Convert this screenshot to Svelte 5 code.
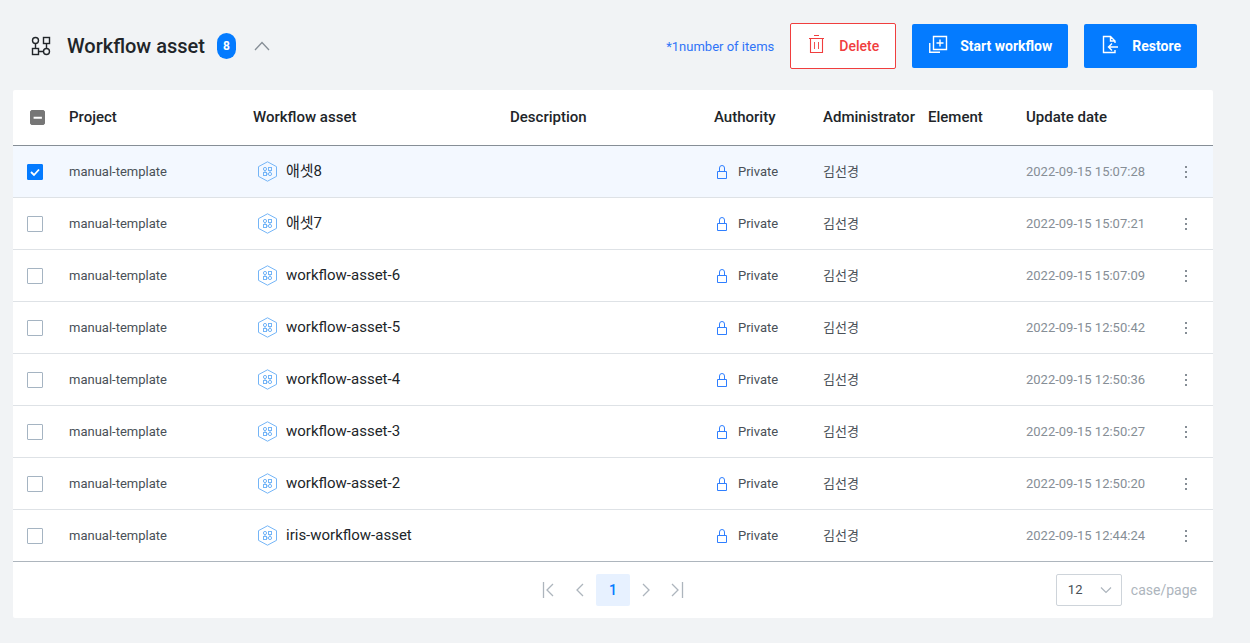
<script>
  const names = [
    ['애셋8', '2022-09-15 15:07:28'],
    ['애셋7', '2022-09-15 15:07:21'],
    ['workflow-asset-6', '2022-09-15 15:07:09'],
    ['workflow-asset-5', '2022-09-15 12:50:42'],
    ['workflow-asset-4', '2022-09-15 12:50:36'],
    ['workflow-asset-3', '2022-09-15 12:50:27'],
    ['workflow-asset-2', '2022-09-15 12:50:20'],
    ['iris-workflow-asset', '2022-09-15 12:44:24'],
  ];
  let rows = $state(
    names.map(([name, updated], i) => ({
      name,
      updated,
      project: 'manual-template',
      authority: 'Private',
      admin: '김선경',
      checked: i === 0,
    }))
  );
  let pageSize = $state('12');
  let open = $state(true);
  let selected = $derived(rows.filter((r) => r.checked).length);
  let allChecked = $derived(selected === rows.length);

  function toggleAll() {
    const next = !allChecked;
    rows.forEach((r) => (r.checked = next));
  }
</script>

<main>
  <header>
    <svg class="flow" viewBox="0 0 20 20" aria-hidden="true">
      <circle cx="4.5" cy="4.5" r="3" /><rect x="12.5" y="1.5" width="6" height="6" />
      <rect x="1.5" y="12.5" width="6" height="6" /><circle cx="15.5" cy="15.5" r="3" />
      <path d="M4.5 7.5v5M15.5 7.5v5M7.5 15.5h5" />
    </svg>
    <h1>Workflow asset</h1>
    <span class="count">{rows.length}</span>
    <button class="fold" aria-label="Toggle list" aria-expanded={open} onclick={() => (open = !open)}>
      <svg viewBox="0 0 16 10" aria-hidden="true"><path d="M1 9l7-7.5L15 9" /></svg>
    </button>

    <div class="actions">
      <span class="note">*{selected}number of items</span>
      <button class="btn danger">
        <svg viewBox="0 0 20 20" aria-hidden="true">
          <path d="M2 4.5h15M7 1.500h5M3.500 4.5v14h12v-14" /><path class="thin" d="M7.500 8v7M11.500 8v7" />
        </svg>
        Delete
      </button>
      <button class="btn primary">
        <svg viewBox="0 0 20 20" aria-hidden="true">
          <path d="M5.500 2.500h13v13h-13zM12 5.500v7M8.500 9h7M1.750 9v9.250h10.250" />
        </svg>
        Start workflow
      </button>
      <button class="btn primary">
        <svg viewBox="0 0 20 20" aria-hidden="true">
          <path d="M15 9V7l-4.500-4.500H3.500v16H15v-2.500M10.500 2.500V7H15M18 13H8.500M12 9.500l-3.500 3.500L12 16.500" />
        </svg>
        Restore
      </button>
    </div>
  </header>

  {#if open}
    <section>
      <table>
        <colgroup>
          <col class="c-check" /><col class="c-project" /><col class="c-name" /><col />
          <col class="c-auth" /><col class="c-admin" /><col class="c-elem" /><col class="c-date" /><col class="c-menu" />
        </colgroup>
        <thead>
          <tr>
            <th class="check head">
              <input type="checkbox" aria-label="Select all" checked={allChecked} indeterminate={selected > 0 && !allChecked} onchange={toggleAll} />
            </th>
            <th>Project</th>
            <th>Workflow asset</th>
            <th>Description</th>
            <th>Authority</th>
            <th>Administrator</th>
            <th>Element</th>
            <th>Update date</th>
            <th></th>
          </tr>
        </thead>
        <tbody>
          {#each rows as row}
            <tr class:selected={row.checked}>
              <td class="check"><input type="checkbox" aria-label={row.name} bind:checked={row.checked} /></td>
              <td>{row.project}</td>
              <td>
                <a class="asset" href="#asset">
                  <svg viewBox="0 0 21 21" aria-hidden="true">
                    <path d="M10.500 0.800l9 4.850v9.700l-9 4.850-9-4.850v-9.700z" />
                    <circle cx="8" cy="8" r="1.600" /><rect x="11.500" y="6.500" width="3" height="3" />
                    <rect x="6.500" y="11.500" width="3" height="3" /><circle cx="13" cy="13" r="1.600" />
                    <path d="M8 9.600v1.900M13 9.500v1.900M9.500 13h1.900" />
                  </svg>
                  <span>{row.name}</span>
                </a>
              </td>
              <td></td>
              <td>
                <span class="auth">
                  <svg viewBox="0 0 12 16" aria-hidden="true"><path d="M1.500 7.500h9v7h-9zM3.500 7.500V4a2.500 2.500 0 0 1 5 0v3.500" /></svg>
                  {row.authority}
                </span>
              </td>
              <td class="admin">{row.admin}</td>
              <td></td>
              <td class="date">{row.updated}</td>
              <td>
                <button class="menu" aria-label="More">
                  <svg viewBox="0 0 4 14" aria-hidden="true"><path d="M1 1h2v2H1zM1 6h2v2H1zM1 11h2v2H1z" /></svg>
                </button>
              </td>
            </tr>
          {/each}
        </tbody>
      </table>

      <footer>
        <nav aria-label="Pages">
          <button aria-label="First page"><svg viewBox="0 0 16 16" aria-hidden="true"><path d="M3.500 0v16M13 2L7 8l6 6" /></svg></button>
          <button aria-label="Previous page"><svg viewBox="0 0 16 16" aria-hidden="true"><path d="M11 2L5 8l6 6" /></svg></button>
          <button class="current" aria-current="page">1</button>
          <button aria-label="Next page"><svg viewBox="0 0 16 16" aria-hidden="true"><path d="M5 2l6 6-6 6" /></svg></button>
          <button aria-label="Last page"><svg viewBox="0 0 16 16" aria-hidden="true"><path d="M2 2l6 6-6 6M12.500 0v16" /></svg></button>
        </nav>
        <label>
          <select bind:value={pageSize}>
            <option>12</option>
            <option>24</option>
            <option>48</option>
          </select>
          case/page
        </label>
      </footer>
    </section>
  {/if}
</main>

<style>
  :global(body) {
    background: #f1f3f5;
  }
  main {
    padding: 2px 37px 24px 13px;
    font-family: Roboto, 'Noto Sans CJK KR', sans-serif;
    font-size: 13px;
    color: #495057;
  }
  button,
  select {
    font: inherit;
    cursor: pointer;
  }
  button {
    border: 0;
    padding: 0;
    background: none;
  }
  svg {
    display: block;
    flex: none;
    fill: none;
    stroke: currentColor;
  }
  header {
    display: flex;
    align-items: center;
    height: 88px;
    padding: 0 16px 0 18px;
  }
  .flow {
    width: 20px;
    height: 20px;
    color: #212529;
    stroke-width: 1.4;
  }
  h1 {
    margin: 0 12px 0 16px;
    font-size: 20px;
    font-weight: 500;
    line-height: 24px;
    color: #212529;
  }
  .count {
    width: 19px;
    border-radius: 10px;
    background: #047bff;
    color: #fff;
    font-size: 12px;
    font-weight: 700;
    line-height: 26px;
    text-align: center;
  }
  .fold {
    margin-left: 18px;
    color: #868e96;
  }
  .fold svg {
    width: 16px;
    height: 10px;
    stroke-width: 1.3;
  }
  .actions {
    display: flex;
    align-items: center;
    gap: 16px;
    margin-left: auto;
  }
  .note {
    color: #2f73f8;
  }
  .btn {
    display: flex;
    align-items: center;
    gap: 12px;
    height: 44px;
    padding: 0 16px;
    border-radius: 2px;
    font-size: 14px;
    font-weight: 700;
  }
  .btn svg {
    width: 20px;
    height: 20px;
    margin-bottom: 4px;
    stroke-width: 1.4;
  }
  .primary {
    background: #047bff;
    color: #fff;
  }
  .danger {
    height: 46px;
    border: 1px solid #f03e3e;
    background: #fff;
    color: #f03e3e;
    font-weight: 500;
  }
  .danger svg {
    stroke-width: 1.1;
  }
  .danger .thin {
    stroke-width: 0.9;
  }
  section {
    border-radius: 2px;
    background: #fff;
  }
  table {
    width: 100%;
    table-layout: fixed;
    border-collapse: separate;
    border-spacing: 0;
  }
  .c-check {
    width: 56px;
  }
  .c-project {
    width: 184px;
  }
  .c-name {
    width: 257px;
  }
  .c-auth {
    width: 109px;
  }
  .c-admin {
    width: 105px;
  }
  .c-elem {
    width: 98px;
  }
  .c-date {
    width: 148px;
  }
  .c-menu {
    width: 39px;
  }
  th,
  td {
    box-sizing: border-box;
    padding: 0;
    text-align: left;
    white-space: nowrap;
    border-bottom: 1px solid #dee2e6;
  }
  th {
    height: 56px;
    padding-bottom: 2px;
    color: #212529;
    font-size: 15px;
    font-weight: 500;
  }
  td {
    height: 52px;
  }
  tr:last-child td {
    border-color: #adb5bd;
  }
  thead tr:last-child th {
    border-color: #868e96;
  }
  .selected td {
    background: #f3f8ff;
  }
  .check {
    padding-left: 14px;
  }
  .head {
    padding: 0 0 0 17px;
  }
  input {
    display: block;
    box-sizing: border-box;
    appearance: none;
    width: 16px;
    height: 16px;
    margin: 0;
    border: 1px solid #a5b4c2;
    border-radius: 1px;
    background: #fff center / 14px 14px no-repeat;
  }
  input:checked {
    border-color: #047bff;
    background-color: #047bff;
    background-image: url("data:image/svg+xml,%3Csvg xmlns='http://www.w3.org/2000/svg' viewBox='0 0 14 14'%3E%3Cpath d='M3 7l3 3 5-5.500' fill='none' stroke='white' stroke-width='1.800'/%3E%3C/svg%3E");
  }
  .head input {
    width: 15px;
    height: 15px;
  }
  input:indeterminate {
    border-color: #767676;
    border-radius: 2px;
    background-color: #767676;
    background-image: url("data:image/svg+xml,%3Csvg xmlns='http://www.w3.org/2000/svg' viewBox='0 0 14 14'%3E%3Cpath d='M3 7h8' stroke='white' stroke-width='2'/%3E%3C/svg%3E");
  }
  .asset {
    display: flex;
    align-items: center;
    gap: 8px;
    padding-left: 4px;
    color: #212529;
    font-size: 15px;
    line-height: 20px;
    text-decoration: none;
  }
  .asset svg {
    width: 21px;
    height: 21px;
    color: #74b5f7;
  }
  .asset span {
    padding-bottom: 2px;
  }
  .auth {
    display: flex;
    align-items: center;
    gap: 10px;
    padding-left: 2px;
  }
  .auth svg {
    width: 12px;
    height: 16px;
    color: #2f7fff;
  }
  .admin {
    padding-bottom: 2px;
  }
  .date {
    color: #868e96;
  }
  .menu {
    display: block;
    padding: 4px 10px;
    color: #868e96;
  }
  .menu svg {
    width: 4px;
    height: 14px;
    fill: currentColor;
    stroke: none;
  }
  footer {
    display: grid;
    grid-template-columns: 1fr auto 1fr;
    align-items: center;
    height: 56px;
    padding: 0 16px;
  }
  nav {
    display: flex;
    grid-column: 2;
    color: #adb5bd;
  }
  nav button {
    display: grid;
    place-items: center;
    width: 32px;
    height: 32px;
    color: inherit;
  }
  nav svg {
    width: 16px;
    height: 16px;
    stroke-width: 1.3;
  }
  nav .current {
    width: 34px;
    border-radius: 2px;
    background: #e7f1ff;
    color: #047bff;
    font-size: 14px;
    font-weight: 500;
  }
  label {
    display: flex;
    align-items: center;
    justify-self: end;
    gap: 9px;
    color: #adb5bd;
    font-size: 14px;
  }
  select {
    appearance: none;
    width: 66px;
    height: 32px;
    padding: 0 11px 2px;
    border: 1px solid #ced4da;
    border-radius: 2px;
    background: #fff url("data:image/svg+xml,%3Csvg xmlns='http://www.w3.org/2000/svg' viewBox='0 0 12 12'%3E%3Cpath d='M1 3.500l5 5 5-5' fill='none' stroke='%23adb5bd' stroke-width='1.200'/%3E%3C/svg%3E") right 9px center / 12px 12px no-repeat;
    color: #495057;
    font-size: 13px;
  }
</style>
